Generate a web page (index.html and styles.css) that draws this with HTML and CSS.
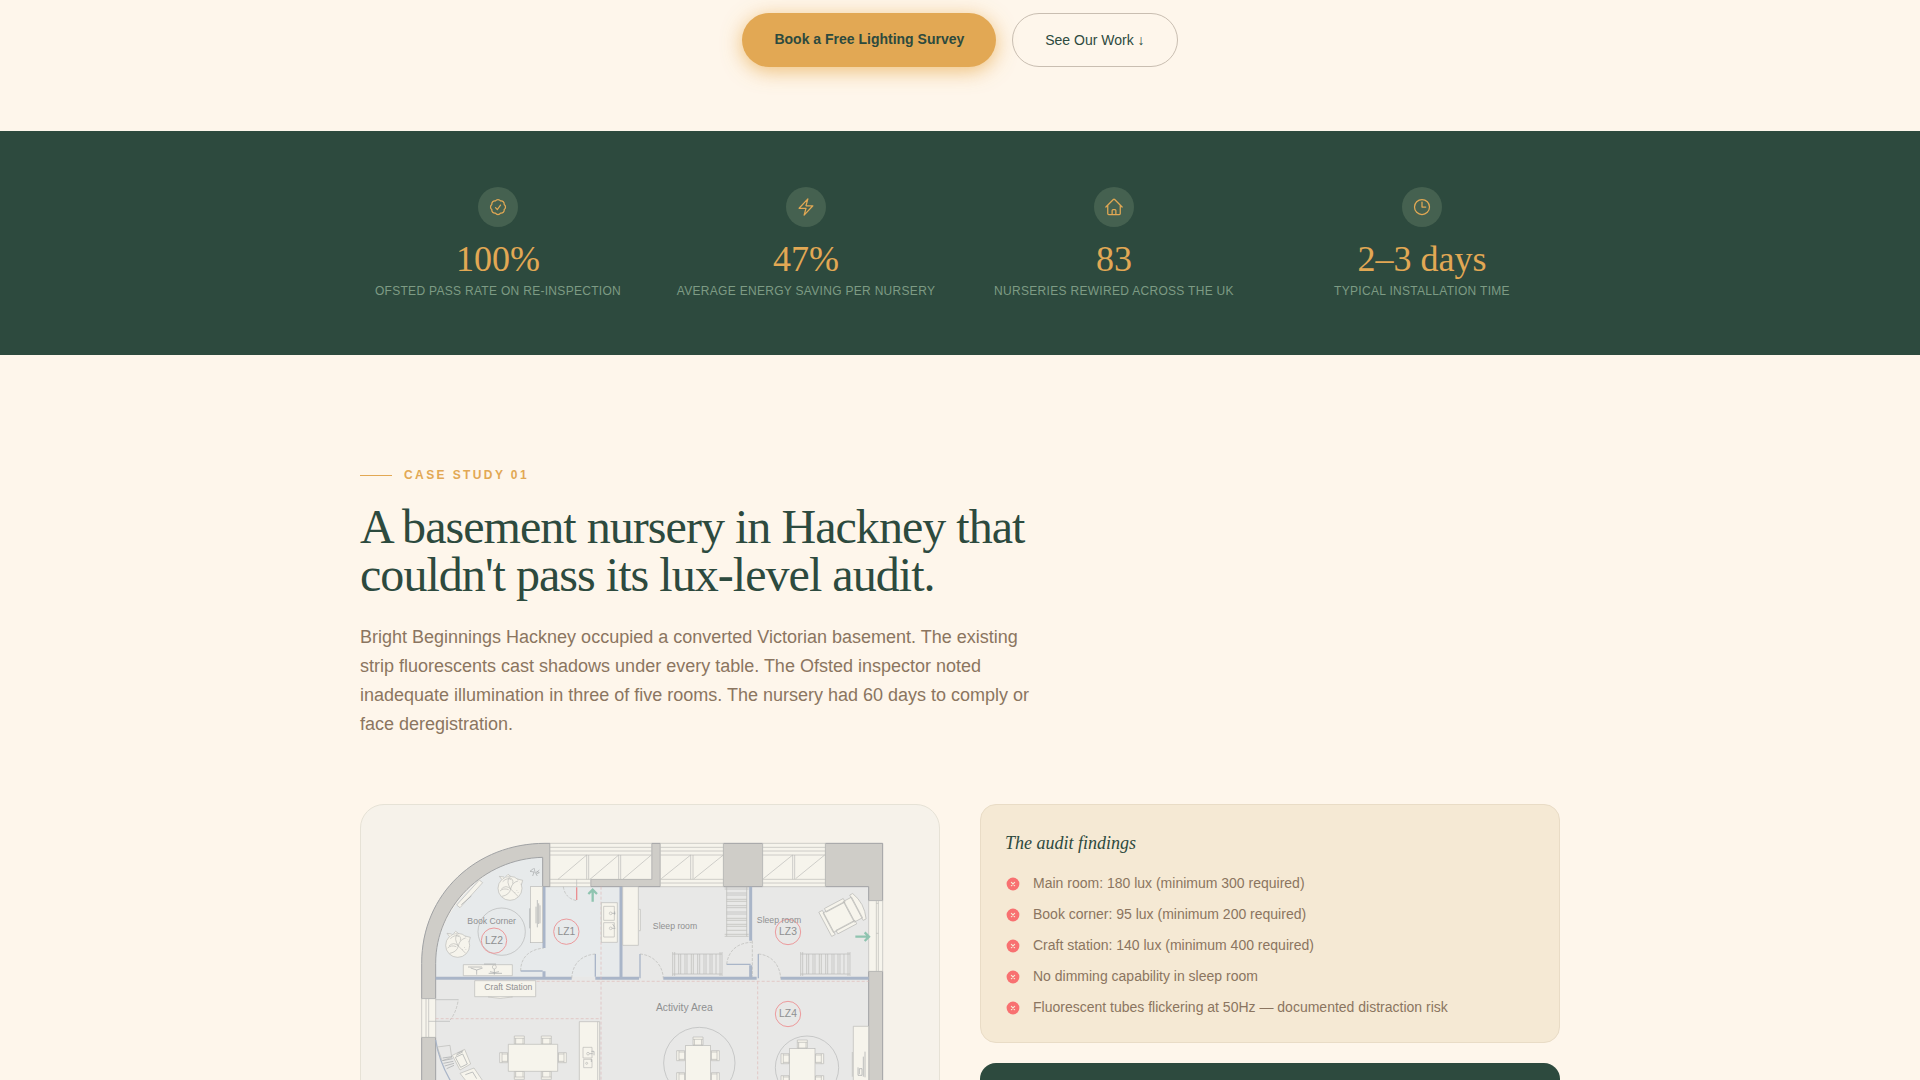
FILE: index.html
```html
<!DOCTYPE html>
<html lang="en">
<head>
	<meta charset="UTF-8">
	<meta name="viewport" content="width=device-width, initial-scale=1">
	<title>Nursery Lighting</title>
	<link rel="stylesheet" href="styles.css">
</head>
<body>
	<section class="hero">
		<div class="hero-actions">
			<a class="btn btn-primary" href="#survey">Book a Free Lighting Survey</a>
			<a class="btn btn-outline" href="#work">See Our Work ↓</a>
		</div>
	</section>

	<section class="stats">
		<div class="container stats-grid">
			<div class="stat">
				<div class="stat-icon">
					<svg viewBox="0 0 24 24"><path d="M9 12.75L11.25 15 15 9.75M21 12c0 1.268-.63 2.39-1.593 3.068a3.745 3.745 0 01-1.043 3.296 3.745 3.745 0 01-3.296 1.043A3.745 3.745 0 0112 21c-1.268 0-2.39-.63-3.068-1.593a3.746 3.746 0 01-3.296-1.043 3.745 3.745 0 01-1.043-3.296A3.745 3.745 0 013 12c0-1.268.63-2.39 1.593-3.068a3.745 3.745 0 011.043-3.296 3.746 3.746 0 013.296-1.043A3.746 3.746 0 0112 3c1.268 0 2.39.63 3.068 1.593a3.746 3.746 0 013.296 1.043 3.746 3.746 0 011.043 3.296A3.745 3.745 0 0121 12z"/></svg>
				</div>
				<div class="stat-number">100%</div>
				<div class="stat-label">Ofsted pass rate on re-inspection</div>
			</div>
			<div class="stat">
				<div class="stat-icon">
					<svg viewBox="0 0 24 24"><path d="M3.75 13.5l10.5-11.25L12 10.5h8.25L9.75 21.75 12 13.5H3.75z"/></svg>
				</div>
				<div class="stat-number">47%</div>
				<div class="stat-label">Average energy saving per nursery</div>
			</div>
			<div class="stat">
				<div class="stat-icon">
					<svg viewBox="0 0 24 24"><path d="M2.25 12l8.954-8.955c.44-.439 1.152-.439 1.591 0L21.75 12M4.5 9.75v10.125c0 .621.504 1.125 1.125 1.125H9.75v-4.875c0-.621.504-1.125 1.125-1.125h2.25c.621 0 1.125.504 1.125 1.125V21h4.125c.621 0 1.125-.504 1.125-1.125V9.75M8.25 21h8.25"/></svg>
				</div>
				<div class="stat-number">83</div>
				<div class="stat-label">Nurseries rewired across the UK</div>
			</div>
			<div class="stat">
				<div class="stat-icon">
					<svg viewBox="0 0 24 24"><path d="M12 6v6h4.5m4.5 0a9 9 0 11-18 0 9 9 0 0118 0z"/></svg>
				</div>
				<div class="stat-number">2–3 days</div>
				<div class="stat-label">Typical installation time</div>
			</div>
		</div>
	</section>

	<section class="case" id="work">
		<div class="container">
			<div class="case-head">
				<div class="eyebrow">Case Study 01</div>
				<h2>A basement nursery in Hackney that couldn't pass its lux-level audit.</h2>
				<p>Bright Beginnings Hackney occupied a converted Victorian basement. The existing strip fluorescents cast shadows under every table. The Ofsted inspector noted inadequate illumination in three of five rooms. The nursery had 60 days to comply or face deregistration.</p>
			</div>
			<div class="case-grid">
				<div class="plan-card">
					<svg class="plan" viewBox="33 45 1734 1302" role="img" aria-label="Nursery floor plan with lighting zones">
						<defs>
							<g id="chair">
								<rect x="-12" y="-10" width="24" height="22"/>
								<path d="M-15 -12h30v7h-30zM-15 -5v17h4v-17M15 -5v17h-4v-17"/>
							</g>
							<g id="cot">
								<path d="M0 0v72M6 0v72M142 0v72M148 0v72M0 6h148M0 66h148M18 6v60M24 6v60M37 6v60M43 6v60M56 6v60M62 6v60M75 6v60M81 6v60M94 6v60M100 6v60M112 6v60M118 6v60M130 6v60"/>
							</g>
							<g id="plant">
								<circle r="36"/>
								<path d="M2 2q-14-14-28 0M2 2q-14-22-4-34M2 2q4-20 22-24M2 2l22 22M2 2q-4 18-26 22M-22-20q14-14 26-6M-4-32q16 2 12 18M-30 8q10-10 26-4M-24-26l-8-10 14 2M22-28l16 4-4 14M-12-36l6-6 8 6M20 6l2 2M14 12l2 2M24 12l2 2"/>
							</g>
							<g id="round-table">
								<rect x="-38" y="-40" width="76" height="200"/>
								<use href="#chair" x="0" y="-54"/>
								<use href="#chair" transform="translate(-52 -10) rotate(-90)"/>
								<use href="#chair" transform="translate(52 -10) rotate(90)"/>
								<use href="#chair" transform="translate(-52 56) rotate(-90)"/>
								<use href="#chair" transform="translate(52 56) rotate(90)"/>
							</g>
						</defs>

						<!-- floor -->
						<path class="floor" d="M257 1347V520C257 370 400 202 578 202V288H1557V1347z"/>
						<path class="floor-tint" d="M257 560V520C257 370 400 202 578 202V288H810V560z"/>

						<!-- outer walls -->
						<path class="wall" d="M215 626V520C215 310 380 160 585 160H600V290H578V202C400 206 257 350 257 520V626z"/>
						<path class="wall" d="M215 742h42V1347h-42zM722 268H905V160H931V290H722zM1120 160H1238V290H1120zM1426 160H1598V332H1556V290H1426zM1556 544h42V1347h-42z"/>

						<!-- windows -->
						<g class="item">
							<path d="M600 160H905V268H722V290H600zM931 160H1120V290H931zM1238 160H1426V290H1238zM215 626H257V742H215zM1556 332H1598V544H1556z"/>
							<path d="M600 172H905M600 183H905M600 195H905M600 268H722M600 279H722M710 195V268M716 195V268M806 195V268M812 195V268M624 268L710 195M720 268L806 195M818 268L904 195M680 268V290"/>
							<path d="M931 172H1120M931 183H1120M931 195H1120M931 268H1120M931 279H1120M1022 195V268M1029 195V268M934 266L1022 195M1032 266L1120 195"/>
							<path d="M1238 172H1426M1238 183H1426M1238 195H1426M1238 268H1426M1238 279H1426M1328 195V268M1334 195V268M1240 266L1328 195M1337 266L1424 195"/>
							<path d="M228 626V742M236 626V742M1579 332V544M1585 332V544M1579 340h6M1579 430h6"/>
						</g>

						<!-- partitions -->
						<path class="partition" d="M582 290V474M582 544V560M257 565H665M736 565H867M813 290V560M940 565H1220M1202 290V452M1202 526V560M1292 565H1556"/>
						<path class="partition-thin" d="M512 543H578M736 492V560M870 492V565M1130 523H1202M1225 492V565M257 750Q266 810 300 870T380 990"/>
						<path class="swing" d="M512 543C512 500 540 478 582 474M665 565C668 515 700 495 736 492M870 492C910 495 938 525 940 565M1130 523C1135 480 1165 458 1205 457M1225 492C1265 495 1290 525 1292 565M640 290Q645 325 680 332M300 690Q318 670 325 629"/>
						<path class="zone" d="M753 290V1347M560 574H1556M257 686H753M1223 574V1347"/>
						<path class="swing" d="M1207 452V560"/>
						<path class="alert" d="M680 292V330"/>
						<path class="thin" d="M257 629H325M236 694H300"/>

						<!-- book corner -->
						<g class="item">
							<use href="#plant" x="480" y="295"/>
							<use href="#plant" x="323" y="466"/>
							<path d="M320 345L388 270 398 278 330 353z"/>
							<path class="dark" d="M334 344L364 318M550 236l-10 8 12 2-4 12M552 234l4 16 12-10M560 244l8 4-10 4 4 6"/>
							<rect x="541" y="290" width="37" height="168"/>
							<path class="dark" d="M562 330V412M566 340V402M558 350V400M570 346V400M539 355V415"/>
							<path d="M340 524H487V557H340z"/>
							<path class="dark" d="M354 531h42M362 534l18 6 18-6M380 540v14M402 522h36M433 530v24M416 550h40M420 545l13 3 14-3"/>
							<circle cx="433" cy="531" r="6"/>
							<path d="M374 572H557V620H374z"/>
							<path d="M414 621q36 8 74 0"/>
						</g>
						<circle class="ring" cx="455" cy="425" r="71"/>

						<!-- sinks and cupboards -->
						<g class="item">
							<path d="M754 338H802V457H754zM761 349H793V391H761zM761 398H793V441H761z"/>
							<path class="dark" d="M782 370h14M794 364v10M782 415h14M788 402l6 10"/>
							<circle cx="782" cy="370" r="4"/>
							<circle cx="782" cy="415" r="4"/>
							<path d="M818 290H865V466H818z"/>
							<path d="M867 358h4v64h-4"/>
							<path d="M688 695H749V1000H688zM743 695V1000M699 772H726V804H699zM701 808H726V833H701z"/>
							<path class="dark" d="M714 791h14M724 784h8v12M724 808v8"/>
							<circle cx="714" cy="791" r="4"/>
							<circle cx="710" cy="820" r="3"/>
							<path d="M1510 709H1556V1000H1510zM1507 786V860"/>
							<path class="dark" d="M1540 800V860M1545 785V862M1524 832v24h12v-20h-8v16"/>
						</g>

						<!-- cots -->
						<g class="item hollow">
							<use href="#cot" x="968" y="486"/>
							<use href="#cot" x="1352" y="486"/>
							<use href="#cot" transform="translate(1196 291) rotate(90)"/>
						</g>
						<!-- armchair -->
						<g class="item" transform="translate(1480 373) rotate(-28)">
							<path d="M-42 -42H22V-30H-42zM-42 32H22V44H-42zM-52 -32H20V34H-52zM18 -34H46V36H18zM44 -42H54Q72 0 54 44H44zM-62 -40h12V42h-12z"/>
						</g>

						<!-- activity area -->
						<g class="item">
							<use href="#chair" x="508" y="750"/>
							<use href="#chair" x="589" y="750"/>
							<use href="#chair" transform="translate(461 803) rotate(-90)"/>
							<use href="#chair" transform="translate(637 803) rotate(90)"/>
							<use href="#chair" transform="translate(508 856) rotate(180)"/>
							<use href="#chair" transform="translate(589 856) rotate(180)"/>
							<path d="M475 763H623V844H475z"/>
							<use href="#round-table" x="1044" y="807"/>
							<use href="#round-table" x="1357" y="816"/>
							<path class="hollow" d="M262 771L300 766 305 802 276 812z"/>
							<path d="M307 796L344 778 362 822 330 840zM330 850L372 834 400 875H350z"/>
							<path class="dark" d="M278 804l28-4M278 812l30-6M280 820l30-6M284 828l28-8M290 836l22-10M316 802l22-10 14 30-20 10zM318 796l20-10M322 790l18-8M346 854l22-8 12 20"/>
						</g>
						<circle class="ring" cx="1048" cy="819" r="107"/>
						<circle class="ring" cx="1371" cy="833" r="95"/>

						<!-- emergency exits -->
						<path class="exit" d="M728 335V300M715 312L728 299 741 312M1516 440H1556M1544 427L1557 440 1544 453"/>

						<!-- lighting zones -->
						<g class="lz">
							<circle cx="432" cy="452" r="38"/>
							<circle cx="649" cy="425" r="38"/>
							<circle cx="1314" cy="426" r="38"/>
							<circle cx="1314" cy="672" r="38"/>
						</g>
						<g class="plan-text">
							<text x="425" y="403">Book Corner</text>
							<text x="475" y="601">Craft Station</text>
							<text x="975" y="416">Sleep room</text>
							<text x="1287" y="398">Sleep room</text>
							<text class="big" x="1003" y="664">Activity Area</text>
							<text class="big" x="432" y="462">LZ2</text>
							<text class="big" x="649" y="435">LZ1</text>
							<text class="big" x="1314" y="436">LZ3</text>
							<text class="big" x="1314" y="682">LZ4</text>
						</g>
					</svg>
				</div>
				<div class="case-side">
					<div class="findings">
						<h3>The audit findings</h3>
						<ul>
							<li><svg viewBox="0 0 20 20"><circle cx="10" cy="10" r="8"/><path d="M8 8l4 4M12 8l-4 4"/></svg>Main room: 180 lux (minimum 300 required)</li>
							<li><svg viewBox="0 0 20 20"><circle cx="10" cy="10" r="8"/><path d="M8 8l4 4M12 8l-4 4"/></svg>Book corner: 95 lux (minimum 200 required)</li>
							<li><svg viewBox="0 0 20 20"><circle cx="10" cy="10" r="8"/><path d="M8 8l4 4M12 8l-4 4"/></svg>Craft station: 140 lux (minimum 400 required)</li>
							<li><svg viewBox="0 0 20 20"><circle cx="10" cy="10" r="8"/><path d="M8 8l4 4M12 8l-4 4"/></svg>No dimming capability in sleep room</li>
							<li><svg viewBox="0 0 20 20"><circle cx="10" cy="10" r="8"/><path d="M8 8l4 4M12 8l-4 4"/></svg>Fluorescent tubes flickering at 50Hz — documented distraction risk</li>
						</ul>
					</div>
					<div class="solution"></div>
				</div>
			</div>
		</div>
	</section>
</body>
</html>
```
FILE: styles.css
```css
* {
	box-sizing: border-box;
	margin: 0;
	padding: 0;
}
body {
	background-color: #fef6eb;
	color: #8b7560;
	font-family: "Liberation Sans", Arial, sans-serif;
	font-size: 14px;
}
.container {
	max-width: 1200px;
	margin: 0 auto;
}

/* hero */
.hero {
	padding: 13px 24px 64px;
}
.hero-actions {
	display: flex;
	justify-content: center;
	gap: 16px;
}
.btn {
	padding: 16px 32px;
	border-radius: 27px;
	color: #2d4a3e;
	font-size: 14px;
	line-height: 20px;
	text-decoration: none;
}
.btn-primary {
	background-color: #e2a854;
	font-weight: bold;
	box-shadow: 0 4px 20px rgba(232, 168, 72, 0.7);
}
.btn-outline {
	border: 1px solid #c9beb1;
}

/* stats */
.stats {
	padding: 56px 24px;
	background-color: #2d4a3e;
}
.stats-grid {
	display: grid;
	grid-template-columns: repeat(4, 1fr);
	gap: 32px;
}
.stat {
	text-align: center;
}
.stat-icon {
	display: flex;
	align-items: center;
	justify-content: center;
	width: 40px;
	height: 40px;
	margin: 0 auto 14px;
	border-radius: 50%;
	background-color: #456150;
}
.stat-icon svg {
	width: 20px;
	height: 20px;
	fill: none;
	stroke: #e2a854;
	stroke-width: 1.5;
	stroke-linecap: round;
	stroke-linejoin: round;
}
.stat-number {
	margin-bottom: 6px;
	color: #e2a854;
	font-family: "Liberation Serif", "Times New Roman", serif;
	font-size: 36px;
	line-height: 36px;
}
.stat-label {
	color: #7d9b84;
	font-size: 12px;
	line-height: 16px;
	text-transform: uppercase;
	letter-spacing: 0.025em;
}

/* case study */
.case {
	padding: 112px 24px;
}
.case-head {
	max-width: 672px;
	margin-bottom: 65px;
}
.eyebrow {
	display: flex;
	align-items: center;
	gap: 12px;
	margin-bottom: 20px;
	color: #e2a854;
	font-size: 12px;
	font-weight: bold;
	line-height: 16px;
	text-transform: uppercase;
	letter-spacing: 0.2em;
}
.eyebrow::before {
	content: "";
	width: 32px;
	height: 1px;
	background-color: #e2a854;
}
.case-head h2 {
	margin-bottom: 24px;
	color: #2d4a3e;
	font-family: "Liberation Serif", "Times New Roman", serif;
	font-size: 48px;
	font-weight: normal;
	line-height: 48px;
	letter-spacing: -0.02em;
}
.case-head p {
	font-size: 18px;
	line-height: 29px;
}
.case-grid {
	display: grid;
	grid-template-columns: 1fr 1fr;
	align-items: start;
	gap: 40px;
}
.plan-card {
	overflow: hidden;
	border: 1px solid #e6e2d6;
	border-radius: 24px;
	background-color: #f6f2ea;
}
.plan {
	display: block;
	width: 100%;
}
.case-side {
	display: grid;
	gap: 20px;
}
.findings {
	padding: 24px;
	border: 1px solid #e9dcc6;
	border-radius: 16px;
	background-color: #f5e9d4;
}
.findings h3 {
	margin-bottom: 16px;
	color: #2d4a3e;
	font-family: "Liberation Serif", "Times New Roman", serif;
	font-size: 18px;
	font-style: italic;
	font-weight: normal;
	line-height: 28px;
}
.findings ul {
	display: grid;
	gap: 10px;
	list-style: none;
}
.findings li {
	display: flex;
	align-items: center;
	gap: 12px;
	line-height: 21px;
}
.findings svg {
	flex: none;
	width: 16px;
	height: 16px;
	fill: #f87171;
	stroke-linecap: round;
}
.findings svg path {
	stroke: #f5e9d4;
	stroke-width: 1.5;
}
.solution {
	min-height: 176px;
	border-radius: 16px;
	background-color: #2d4a3e;
}

/* floor plan */
.floor {
	fill: #e8e8e7;
}
.floor-tint {
	fill: #e7eaeb;
}
.wall {
	fill: #cfcdc8;
	stroke: #a0a2a4;
	stroke-width: 3;
}
.item {
	fill: #f6f4ec;
	stroke: #b9b9b6;
	stroke-width: 2;
}
.item .dark {
	fill: none;
	stroke: #a3a6a8;
}
.hollow,
.partition,
.partition-thin,
.swing,
.zone,
.alert,
.thin,
.ring,
.exit,
.lz {
	fill: none;
}
.partition {
	stroke: #a9b5c8;
	stroke-width: 9;
}
.partition-thin {
	stroke: #a9b5c8;
	stroke-width: 4;
}
.swing {
	stroke: #b9b9b6;
	stroke-width: 2;
	stroke-dasharray: 9 4;
}
.zone {
	stroke: #dfb9b8;
	stroke-width: 2;
	stroke-dasharray: 9 6;
}
.alert {
	stroke: #ea8f92;
	stroke-width: 4;
}
.thin,
.ring {
	stroke: #b5b6b6;
	stroke-width: 2;
}
.exit {
	stroke: #8fc4b0;
	stroke-width: 7;
}
.lz {
	stroke: #ec9a9c;
	stroke-width: 3;
}
.plan-text {
	fill: #8f9091;
	font-size: 26px;
	text-anchor: middle;
}
.plan-text .big {
	font-size: 31px;
}
```
